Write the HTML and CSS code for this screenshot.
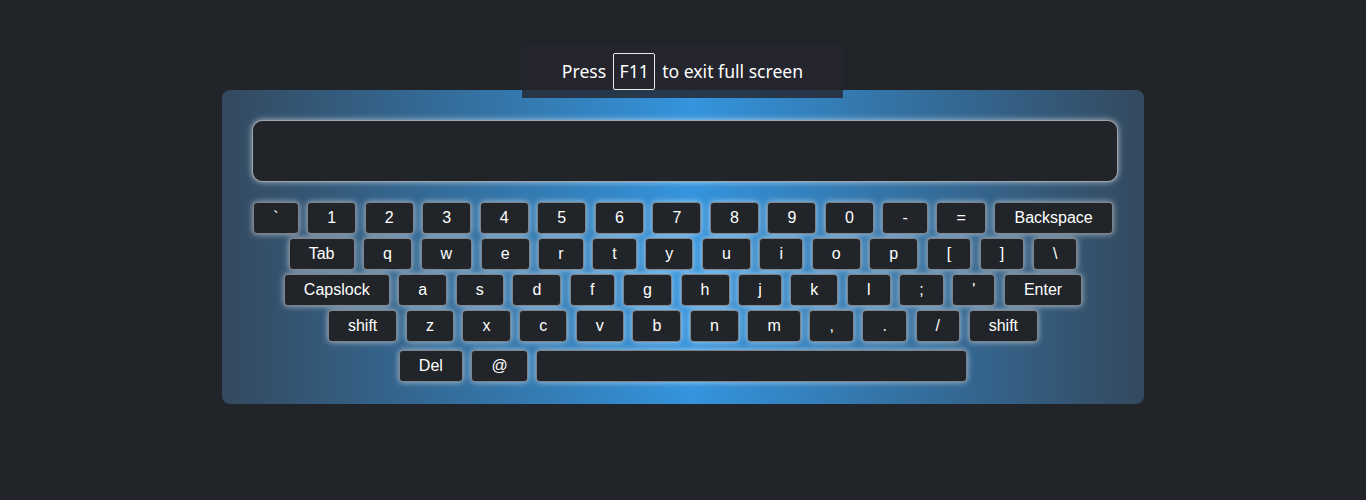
FILE: index.html
```html
<!DOCTYPE html>
<html>
<head>
<meta charset="utf-8">
<link rel="stylesheet" href="styles.css">
</head>
<body>
<div class="page">
  <div class="keyboard">
    <div class="screen"></div>
    <div class="rows">
      <div class="row">
        <span class="key">`</span><span class="key">1</span><span class="key">2</span><span class="key">3</span><span class="key">4</span><span class="key">5</span><span class="key">6</span><span class="key">7</span><span class="key">8</span><span class="key">9</span><span class="key">0</span><span class="key">-</span><span class="key">=</span><span class="key">Backspace</span>
      </div>
      <div class="row">
        <span class="key">Tab</span><span class="key">q</span><span class="key">w</span><span class="key">e</span><span class="key">r</span><span class="key">t</span><span class="key">y</span><span class="key">u</span><span class="key">i</span><span class="key">o</span><span class="key">p</span><span class="key">[</span><span class="key">]</span><span class="key">\</span>
      </div>
      <div class="row">
        <span class="key">Capslock</span><span class="key">a</span><span class="key">s</span><span class="key">d</span><span class="key">f</span><span class="key">g</span><span class="key">h</span><span class="key">j</span><span class="key">k</span><span class="key">l</span><span class="key">;</span><span class="key">'</span><span class="key">Enter</span>
      </div>
      <div class="row">
        <span class="key">shift</span><span class="key">z</span><span class="key">x</span><span class="key">c</span><span class="key">v</span><span class="key">b</span><span class="key">n</span><span class="key">m</span><span class="key">,</span><span class="key">.</span><span class="key">/</span><span class="key">shift</span>
      </div>
      <div class="row row-last">
        <span class="key">Del</span><span class="key">@</span><span class="key key-space"></span>
      </div>
    </div>
  </div>
  <div class="bubble">Press <span class="kbd">F11</span> to exit full screen</div>
</div>
</body>
</html>
```

FILE: styles.css
```css
html, body {
  margin: 0;
  padding: 0;
  background: #212529;
}
body {
  font-family: "Liberation Sans", Arial, sans-serif;
  height: 500px;
  overflow: hidden;
}
.page {
  position: relative;
  padding-top: 90px;
}
.keyboard {
  width: 922px;
  box-sizing: border-box;
  margin: 0 auto;
  padding: 30px 26px 22px 30px;
  border-radius: 8px;
  background: linear-gradient(to right, #34495e 0%, #3494dd 51%, #34495e 100%);
}
.screen {
  width: 866px;
  height: 62px;
  box-sizing: border-box;
  border-radius: 10px;
  background: #212529;
  border: 1px solid rgba(210, 220, 230, 0.7);
  box-shadow: 0 0 6px rgba(255, 255, 255, 0.6);
  margin-bottom: 20px;
}
.rows {
  display: flex;
  flex-direction: column;
  gap: 4px;
  margin-left: -4px;
}
.row {
  display: flex;
  justify-content: center;
  gap: 8.44px;
}
.row-last {
  margin-top: 4px;
}
.key {
  height: 32px;
  box-sizing: border-box;
  padding: 0 19.1px;
  display: flex;
  align-items: center;
  justify-content: center;
  background: #212529;
  color: #ffffff;
  font-size: 16px;
  border-radius: 4px;
  border: 1px solid rgba(200, 210, 220, 0.55);
  box-shadow: 0 0 6px rgba(255, 255, 255, 0.6);
}
.key-space {
  width: 431px;
}
.bubble {
  position: absolute;
  top: 45px;
  left: 522px;
  width: 321px;
  height: 53px;
  box-sizing: border-box;
  background: rgba(36, 38, 46, 0.82);
  color: #ffffff;
  font-family: "Noto Sans", "Open Sans", sans-serif;
  font-size: 17.6px;
  display: flex;
  align-items: center;
  justify-content: center;
  gap: 7px;
  padding-bottom: 1px;
}
.kbd {
  display: inline-flex;
  align-items: center;
  justify-content: center;
  height: 37px;
  width: 42px;
  box-sizing: border-box;
  border: 1px solid #e8e8e8;
  border-radius: 2px;
}
```
